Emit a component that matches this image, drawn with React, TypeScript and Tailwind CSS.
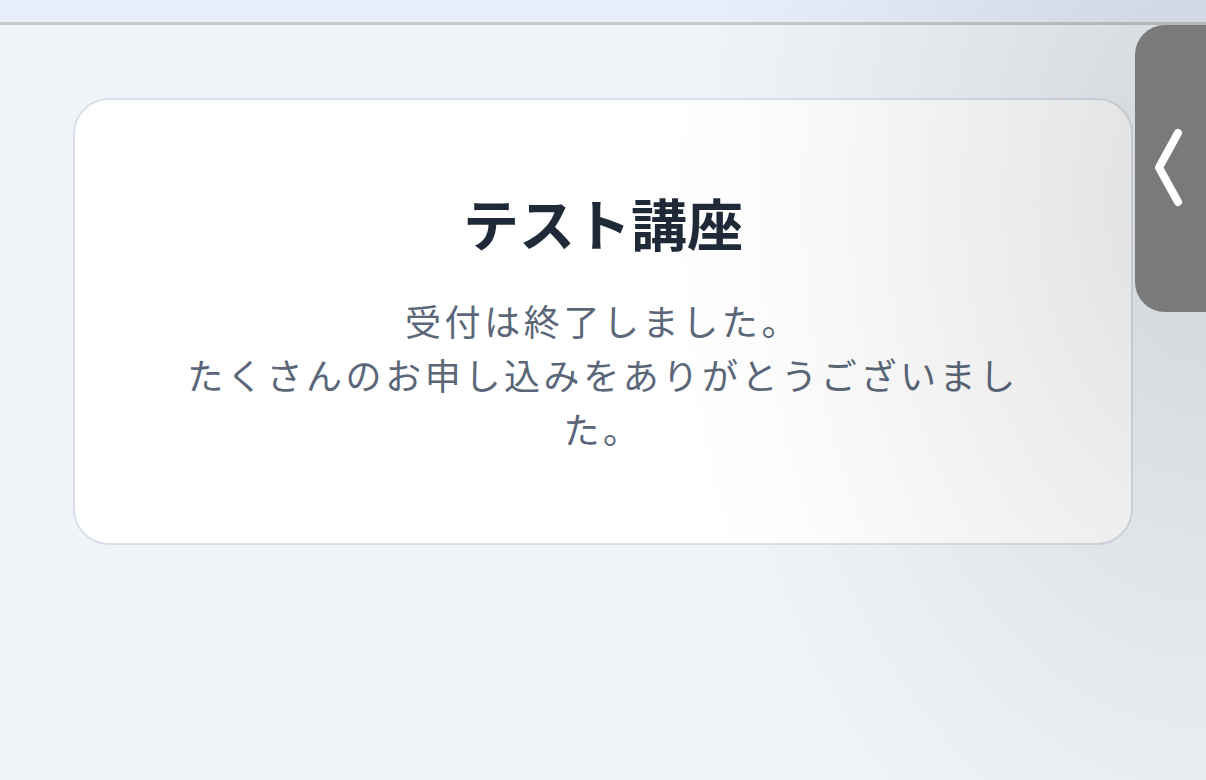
import React from "react";

const jp = { fontFamily: '"Noto Sans CJK JP", "Noto Sans", sans-serif' };

// Drawer handle pinned to the right edge
function DrawerHandle() {
  return (
    <button
      type="button"
      aria-label="open"
      className="absolute right-0 top-[25px] z-20 h-[287px] w-[71px] rounded-l-[30px] bg-[#7a7a7a]"
    >
      <svg width="71" height="287" viewBox="0 0 71 287" className="block">
        <path
          d="M43 108 L24 142.5 L43 177"
          fill="none"
          stroke="#ffffff"
          strokeWidth="8"
          strokeLinecap="round"
          strokeLinejoin="round"
        />
      </svg>
    </button>
  );
}

export default function App() {
  return (
    <div className="relative min-h-[780px] overflow-hidden bg-[#f0f4f8]" style={jp}>
      <header className="h-[25px] border-b-[3px] border-[#c9c9cb] bg-[#e8eefc]" />

      <main className="px-[73px] pt-[73px]">
        <section className="rounded-[36px] border-2 border-[#d9dfe7] bg-white px-24 pb-[88px] pt-[88px] text-center">
          <h1 className="text-[56px] font-bold leading-[1.2] text-[#1f2937]">テスト講座</h1>
          <p className="mt-[38px] text-[36px] leading-[1.5] tracking-[0.1em] text-[#5b6778]">
            受付は終了しました。
            <br />
            たくさんのお申し込みをありがとうございました。
          </p>
        </section>
      </main>

      {/* soft shade cast from the drawer side */}
      <div className="pointer-events-none absolute inset-0 z-10 bg-[radial-gradient(ellipse_560px_860px_at_100%_200px,rgba(0,0,0,0.13)_0%,rgba(0,0,0,0.075)_35%,rgba(0,0,0,0.03)_65%,rgba(0,0,0,0.008)_85%,rgba(0,0,0,0)_100%)]" />

      <DrawerHandle />
    </div>
  );
}
